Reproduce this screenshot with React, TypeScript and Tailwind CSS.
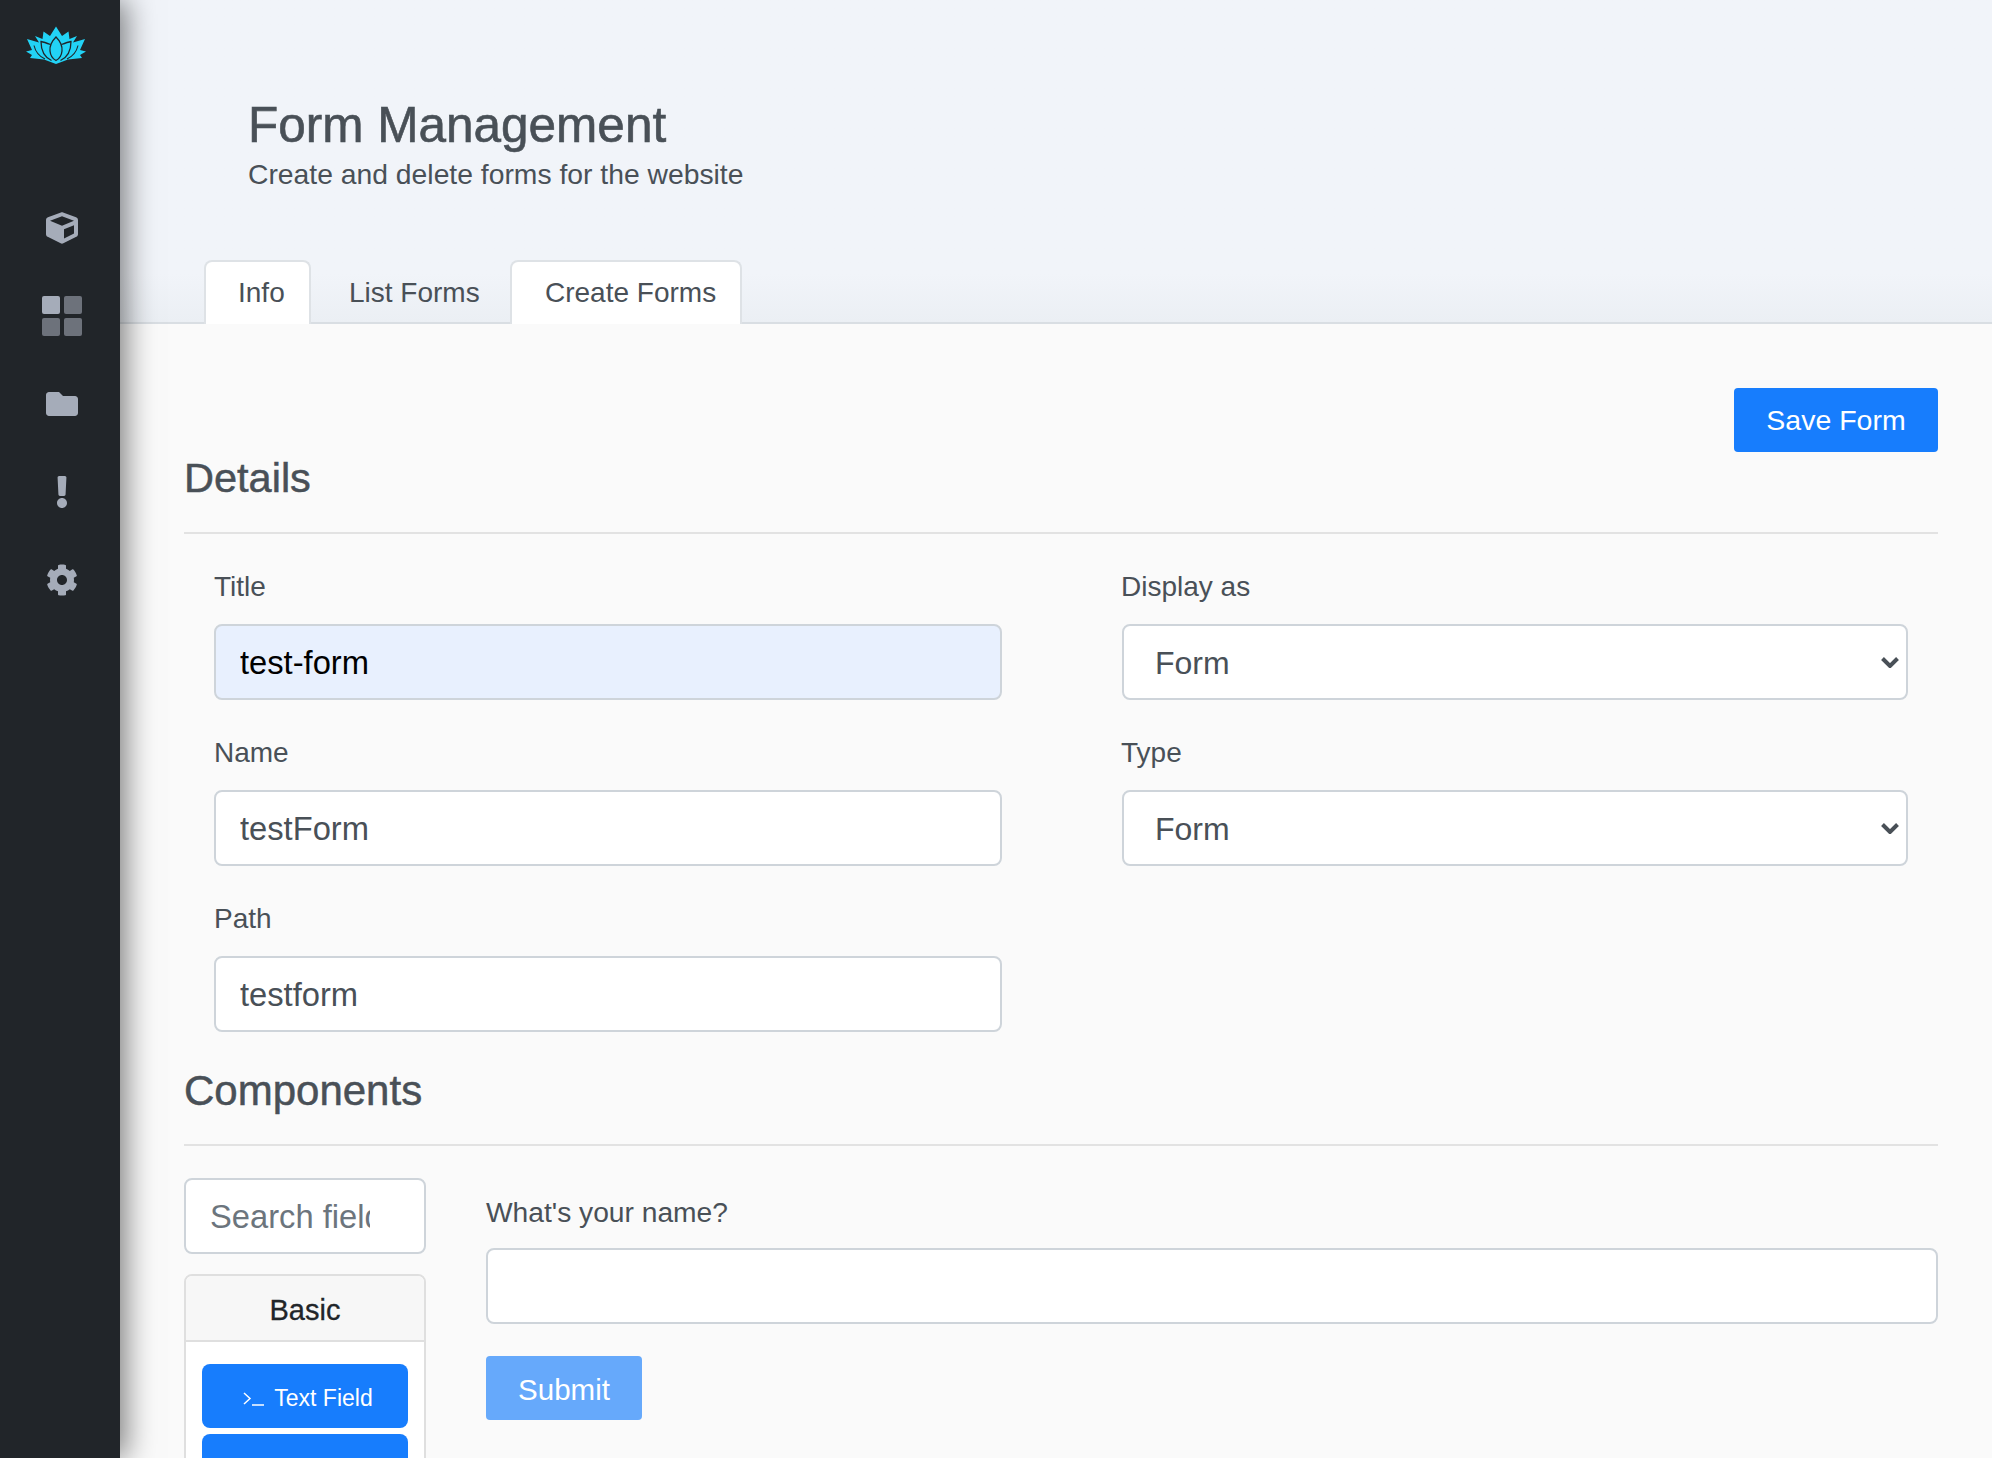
import React from 'react';
import { FaCube, FaFolder, FaExclamation, FaCog, FaFont } from 'react-icons/fa';

const LotusLogo = () => (
    <svg viewBox="26 26 60 38" className="w-[60px] h-[38px]">
        <path
            fill="#22d3f6"
            d="M56 26.5 L62 36 L68.5 31.5 L69.5 39 L77 36 L73 42.5 L85 39 L80 50 L86 51.5 L80 55 L82 58 L68 59.5 L56 64 L44 59.5 L30 58 L32 55 L26 51.5 L32 50 L27 39 L39 42.5 L35 36 L42.5 39 L43.5 31.5 L50 36 Z"
        />
        <path
            fill="none"
            stroke="#212529"
            strokeWidth="1.3"
            d="M56 37 C60 41 62.5 46 62 51 C61.5 56 59 59 56 60.5 C53 59 50.5 56 50 51 C49.5 46 52 41 56 37 Z"
        />
        <path
            fill="none"
            stroke="#212529"
            strokeWidth="1.3"
            d="M50.5 44.5 C46.5 43 43.5 42 41 41.5 C41 50 44 57 51.5 60.5 M61.5 44.5 C65.5 43 68.5 42 71 41.5 C71 50 68 57 60.5 60.5"
        />
        <path
            fill="none"
            stroke="#212529"
            strokeWidth="1.1"
            d="M34 45.5 C35.5 52 39.5 56.5 45 59 M78 45.5 C76.5 52 72.5 56.5 67 59"
        />
    </svg>
);

const GridIcon = () => (
    <div className="grid grid-cols-2 gap-[4px] w-[40px]">
        <div className="h-[18px] rounded-[2px] bg-[#a5acb9]" />
        <div className="h-[18px] rounded-[2px] bg-[#6d727b]" />
        <div className="h-[18px] rounded-[2px] bg-[#6d727b]" />
        <div className="h-[18px] rounded-[2px] bg-[#6d727b]" />
    </div>
);

const TerminalIcon = () => (
    <svg viewBox="0 0 21 14" className="w-[21px] h-[14px]" fill="none" stroke="currentColor" strokeWidth="1.5">
        <path d="M1 1 L7 6.5 L1 12" />
        <path d="M9 13 H21" />
    </svg>
);

const Sidebar = () => (
    <aside className="relative z-10 w-[120px] shrink-0 h-full bg-[#212529] shadow-[6px_0_28px_rgba(0,0,0,0.5)]">
        <div className="pt-[26px] pl-[26px]">
            <LotusLogo />
        </div>
        <nav className="mt-[120px] flex flex-col items-center pl-[4px] text-[#a5acb9]">
            <div className="h-[88px] flex items-center justify-center"><FaCube size={32} /></div>
            <div className="h-[88px] flex items-center justify-center"><GridIcon /></div>
            <div className="h-[88px] flex items-center justify-center"><FaFolder size={32} /></div>
            <div className="h-[88px] flex items-center justify-center"><FaExclamation size={32} /></div>
            <div className="h-[88px] flex items-center justify-center"><FaCog size={32} /></div>
        </nav>
    </aside>
);

const Field = ({ label, value, filled }: { label: string; value: string; filled?: boolean }) => (
    <div className="mb-[32px]">
        <label className="block text-[28px] leading-[42px] mb-[16px] text-[#495057]">{label}</label>
        <input
            readOnly
            value={value}
            className={`block w-full h-[76px] px-[24px] pt-[2px] text-[32.7px] border-2 border-[#ced4da] rounded-[8px] outline-none ${filled ? 'bg-[#e8f0fe] text-[#000]' : 'bg-white text-[#495057]'}`}
        />
    </div>
);

const SelectField = ({ label, value }: { label: string; value: string }) => (
    <div className="mb-[32px]">
        <label className="block text-[28px] leading-[42px] mb-[16px] -ml-[1px] text-[#495057]">{label}</label>
        <div className="relative">
            <select
                defaultValue={value}
                className="block w-full h-[76px] pl-[31px] pr-[24px] pt-[2px] text-[32px] border-2 border-[#ced4da] rounded-[8px] bg-white text-[#495057] outline-none appearance-none"
            >
                <option>{value}</option>
            </select>
            <svg viewBox="0 0 18 11" className="absolute right-[9px] top-[33px] w-[18px] h-[11px]" fill="none" stroke="#495057" strokeWidth="4">
                <path d="M1.5 1.5 L9 9 L16.5 1.5" />
            </svg>
        </div>
    </div>
);

const App: React.FC = () => {
    return (
        <div className="flex h-screen overflow-hidden bg-[#fafafa] text-[#495057] font-['Liberation_Sans',Arial,sans-serif]">
            <Sidebar />
            <main className="flex-1 min-w-0">
                <header className="h-[324px] bg-linear-to-b from-[#f1f4f9] from-85% to-[#ebeff4] border-b-2 border-[#d9dee3] pl-[84px]">
                    <div className="pl-[44px] pt-[97px]">
                        <h1 className="text-[49.5px] leading-[58px] -mt-[1px] [-webkit-text-stroke:0.6px]">Form Management</h1>
                        <p className="text-[28.3px] leading-[42px] -mt-[1px]">Create and delete forms for the website</p>
                    </div>
                    <div className="flex mt-[65px] h-[64px] text-[28px]">
                        <div className="w-[107px] h-[64px] flex items-center pl-[32px] bg-white border-2 border-b-0 border-[#dee2e6] rounded-t-[8px]">Info</div>
                        <div className="w-[199px] h-[64px] pt-[1px] flex items-center pl-[38px]">List Forms</div>
                        <div className="w-[232px] h-[64px] flex items-center pl-[33px] bg-white border-2 border-b-0 border-[#dee2e6] rounded-t-[8px]">Create Forms</div>
                    </div>
                </header>

                <section className="pl-[64px] pr-[54px]">
                    <div className="flex justify-end pt-[64px]">
                        <button className="w-[204px] h-[64px] bg-[#177dfd] text-white text-[28.5px] rounded-[4px]">Save Form</button>
                    </div>
                    <h2 className="text-[41.5px] leading-[48px] h-[48px] mt-[2px] [-webkit-text-stroke:0.5px]">Details</h2>
                    <hr className="mt-[30px] border-t-2 border-[#e2e2e2]" />
                    <div className="grid grid-cols-[788px_786px] gap-x-[120px] pl-[30px] pr-[30px] pt-[32px]">
                        <div>
                            <Field label="Title" value="test-form" filled />
                            <Field label="Name" value="testForm" />
                            <Field label="Path" value="testform" />
                        </div>
                        <div>
                            <SelectField label="Display as" value="Form" />
                            <SelectField label="Type" value="Form" />
                        </div>
                    </div>
                    <h2 className="text-[42px] leading-[48px] mt-[3px] [-webkit-text-stroke:0.5px]">Components</h2>
                    <hr className="mt-[29px] border-t-2 border-[#e2e2e2]" />
                    <div className="flex gap-[60px] pt-[32px]">
                        <div className="w-[242px] shrink-0">
                            <input
                                readOnly
                                placeholder="Search field(s)"
                                className="block w-full h-[76px] pl-[24px] pr-[54px] pt-[2px] text-[32.7px] border-2 border-[#ced4da] rounded-[8px] bg-white outline-none placeholder:text-[#6c757d]"
                            />
                            <div className="mt-[20px] border-2 border-[#dfdfdf] rounded-[8px] bg-white overflow-hidden">
                                <div className="h-[66px] pt-[5px] flex items-center justify-center bg-[#f7f7f7] border-b-2 border-[#dfdfdf] text-[29px] text-[#212529] [-webkit-text-stroke:0.3px]">Basic</div>
                                <div className="px-[16px] pt-[22px] flex flex-col gap-[6px]">
                                    <button className="h-[64px] rounded-[8px] bg-[#177dfd] text-white text-[23px] pl-[6px] pt-[5px] flex items-center justify-center gap-[10px]">
                                        <TerminalIcon />
                                        Text Field
                                    </button>
                                    <button className="h-[64px] rounded-[8px] bg-[#177dfd] text-white text-[23px] pl-[6px] pt-[5px] flex items-center justify-center gap-[10px]">
                                        <FaFont size={20} />
                                        Text Area
                                    </button>
                                </div>
                            </div>
                        </div>
                        <div className="flex-1 min-w-0">
                            <label className="block text-[28.2px] leading-[42px] mb-[15px] mt-[13px] text-[#495057]">What's your name?</label>
                            <input readOnly className="block w-full h-[76px] border-2 border-[#ced4da] rounded-[8px] bg-white outline-none" />
                            <button className="block mt-[32px] w-[156px] h-[64px] pt-[4px] bg-[#66a9fb] text-white text-[29.5px] rounded-[4px]">Submit</button>
                        </div>
                    </div>
                </section>
            </main>
        </div>
    );
};

export default App;
